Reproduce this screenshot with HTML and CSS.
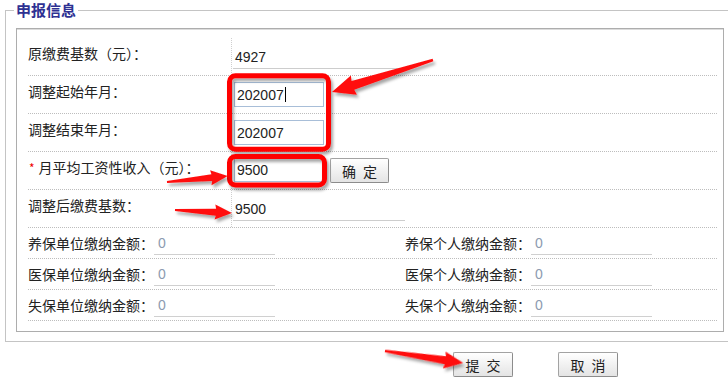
FILE: index.html
```html
<!DOCTYPE html>
<html lang="zh-CN">

<head>
    <meta charset="UTF-8">
    <title>申报信息</title>
    <link rel="stylesheet" href="styles.css">
</head>

<body>
    <fieldset class="report">
        <legend>申报信息</legend>
        <div class="panel">
            <div class="row">
                <div class="label">原缴费基数（元）：</div>
                <div class="cell"><span class="value">4927</span></div>
            </div>
            <div class="row">
                <div class="label">调整起始年月：</div>
                <div class="cell"><div class="input">202007<span class="caret"></span></div></div>
            </div>
            <div class="row">
                <div class="label">调整结束年月：</div>
                <div class="cell"><div class="input">202007</div></div>
            </div>
            <div class="row">
                <div class="label"><span class="required">*</span>月平均工资性收入（元）：</div>
                <div class="cell">
                    <div class="input input-income">9500</div>
                    <button class="btn btn-small">确 定</button>
                </div>
            </div>
            <div class="row">
                <div class="label">调整后缴费基数：</div>
                <div class="cell"><span class="value">9500</span></div>
            </div>

            <div class="row row-half">
                <div class="half">
                    <span class="label-sm">养保单位缴纳金额：</span><span class="amount">0</span>
                </div>
                <div class="half">
                    <span class="label-sm">养保个人缴纳金额：</span><span class="amount">0</span>
                </div>
            </div>
            <div class="row row-half">
                <div class="half">
                    <span class="label-sm">医保单位缴纳金额：</span><span class="amount">0</span>
                </div>
                <div class="half">
                    <span class="label-sm">医保个人缴纳金额：</span><span class="amount">0</span>
                </div>
            </div>
            <div class="row row-half">
                <div class="half">
                    <span class="label-sm">失保单位缴纳金额：</span><span class="amount">0</span>
                </div>
                <div class="half">
                    <span class="label-sm">失保个人缴纳金额：</span><span class="amount">0</span>
                </div>
            </div>
        </div>
    </fieldset>

    <div class="actions">
        <button class="btn">提 交</button>
        <button class="btn">取 消</button>
    </div>

    <!-- annotation marks drawn over the form -->
    <svg class="marks" width="728" height="386" viewBox="0 0 728 386">
        <defs>
            <filter id="shadow" x="-20%" y="-40%" width="140%" height="180%">
                <feDropShadow dx="2" dy="3" stdDeviation="1.5" flood-color="#000" flood-opacity="0.35" />
            </filter>
        </defs>
        <g filter="url(#shadow)">
            <rect x="229.5" y="75.8" width="99" height="73.5" rx="6" fill="none" stroke="#ff0000" stroke-width="5" />
            <rect x="229.5" y="156.5" width="95" height="28.5" rx="6" fill="none" stroke="#ff0000" stroke-width="5" />
        </g>
        <g fill="#ff1010" filter="url(#shadow)">
            <polygon transform="translate(433 60) rotate(162.4)"
                points="0,-1.3 84,-4.5 83,-10 106,0 83,10 84,4.5 0,1.3" />
            <polygon transform="translate(167 182) rotate(-5.6)"
                points="0,-1 45,-3.5 44,-7.5 61,0 44,7.5 45,3.5 0,1" />
            <polygon transform="translate(175 210) rotate(3)"
                points="0,-1 41,-3.5 40,-7.5 57,0 40,7.5 41,3.5 0,1" />
            <polygon transform="translate(385 351) rotate(8.7)"
                points="0,-1.2 61,-4 60,-8.5 79,0 60,8.5 61,4 0,1.2" />
        </g>
    </svg>
</body>

</html>
```

FILE: styles.css
```css
html,
body {
    overflow: hidden;
}

body {
    margin: 0;
    padding: 0;
    background: #fff;
    color: #333;
    font-family: "Noto Sans CJK SC", "Liberation Sans", sans-serif;
    font-size: 14px;
    position: relative;
    width: 728px;
    height: 386px;
}

.report {
    margin: 0 -7px 0 5px;
    padding: 0 10px 9px 10px;
    border: 1px solid #c4c4c4;
    min-width: 0;
}

.report legend {
    margin-left: -2px;
    padding: 0 2px;
    font-size: 15px;
    line-height: 20px;
    font-weight: bold;
    color: #2e3192;
}

.panel {
    margin-top: 8px;
    padding: 9px 6px 10px 11px;
    border: 1px solid #adadad;
    box-shadow: inset 0 1px 0 #dcdcdc;
}

.row {
    display: flex;
    height: 37px;
    border-bottom: 1px dotted #bdbdbd;
}

.label {
    width: 203px;
    margin-top: 7px;
    line-height: 16px;
    color: #222;
}

.required {
    color: #e00;
    font-size: 12px;
    margin: 0 4px 0 1px;
}

.cell {
    flex: 1;
    display: flex;
    align-items: flex-start;
    border-left: 1px dotted #cfcfcf;
}

.value {
    display: block;
    width: 170px;
    margin: 8px 0 0 1px;
    padding-left: 2px;
    line-height: 22px;
    border-bottom: 1px solid #cdcdcd;
    font-family: "Liberation Sans", Arial, sans-serif;
    color: #222;
}

.input {
    width: 86px;
    height: 23px;
    margin: 6px 0 0 2px;
    padding-left: 2px;
    line-height: 24px;
    border: 1px solid #a8bed8;
    font-family: "Liberation Sans", Arial, sans-serif;
    color: #222;
}

.input-income {
    margin-top: 5px;
}

.caret {
    display: inline-block;
    width: 1px;
    height: 15px;
    margin-left: 1px;
    vertical-align: -2px;
    background: #000;
}

.btn {
    width: 60px;
    height: 25px;
    padding: 0 0 0 2px;
    border: 1px solid #a3a3a3;
    border-right-color: #8c8c8c;
    border-bottom-color: #8c8c8c;
    border-radius: 2px;
    background: linear-gradient(#ffffff, #e4e4e4);
    font-family: "Noto Sans CJK SC", sans-serif;
    font-size: 14px;
    letter-spacing: 2px;
    color: #222;
}

.btn-small {
    width: 59px;
    margin: 6px 0 0 6px;
}

.row-half {
    height: 30px;
    align-items: center;
}

.half {
    display: flex;
    align-items: center;
    align-self: stretch;
    flex: 0 0 377px;
}

.half + .half {
    flex: 1;
}

.label-sm {
    width: 126px;
    color: #222;
}

.amount {
    align-self: flex-end;
    width: 117px;
    margin-bottom: 3px;
    padding-left: 4px;
    line-height: 22px;
    border-bottom: 1px solid #d0d0d0;
    font-family: "Liberation Sans", Arial, sans-serif;
    color: #8c9bb0;
}

.actions {
    display: flex;
    gap: 45px;
    margin-top: 10px;
    padding-left: 453px;
}

.marks {
    position: absolute;
    top: 0;
    left: 0;
    pointer-events: none;
}
```
